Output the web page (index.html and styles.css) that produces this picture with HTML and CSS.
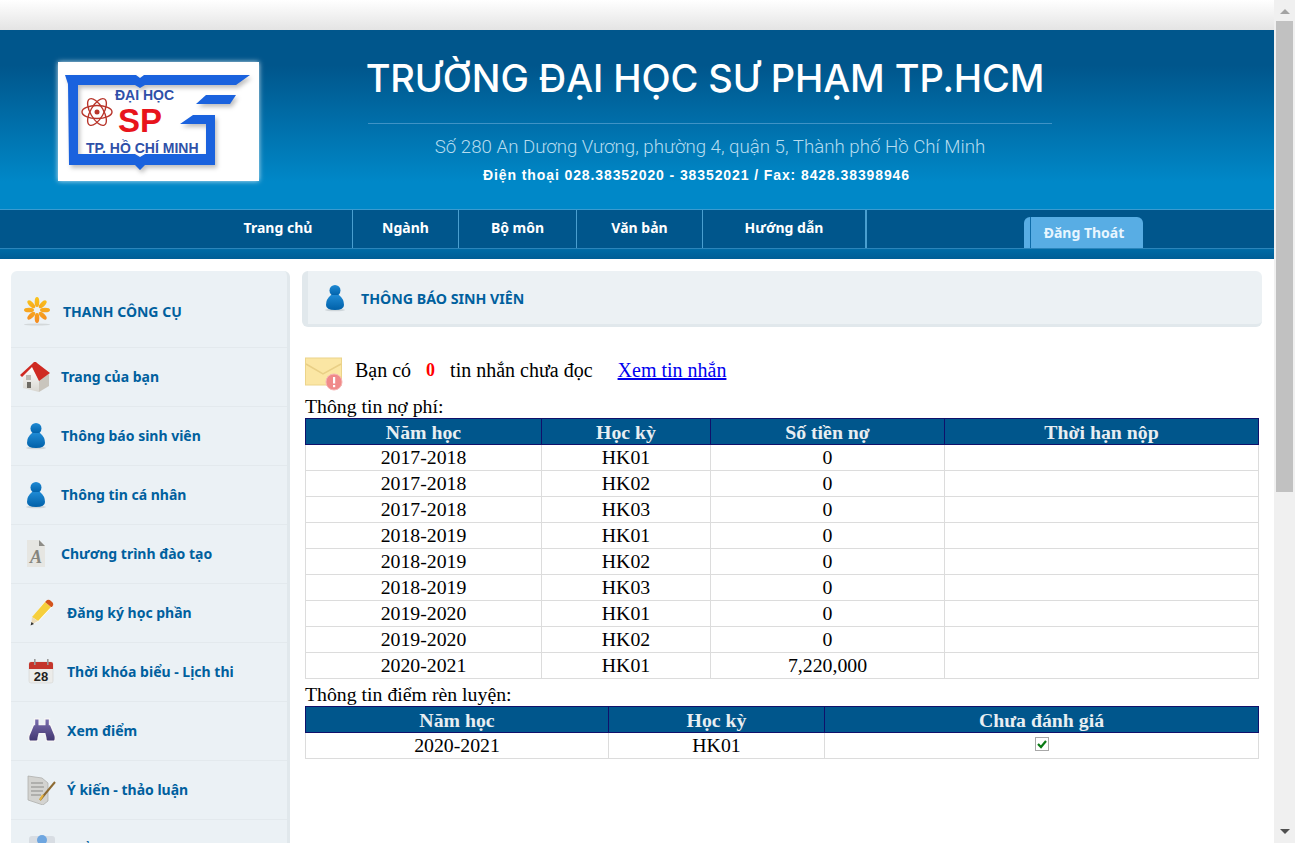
FILE: index.html
```html
<!DOCTYPE html>
<html>
<head>
    <title>Thông báo sinh viên</title>
    <link rel="stylesheet" href="styles.css">
</head>
<body>
    <div class="page">
        <div class="top-strip"></div>

        <div class="banner">
            <div class="logo-box">
                <svg class="logo" width="201" height="119" viewBox="0 0 201 119">
                    <path class="logo-frame" d="M7 13 H78 L82 16 L86 13 H192 L178 23 H87 L82 26 L77 23 H20 V92 H77 L82 95 L87 92 H148 V62 H122 L135 53 H157 V103 H87 L82 108 L77 103 H11 L10 22 Z"/>
                    <path class="logo-frame" d="M138 42 L148 33 H178 L172 42 Z"/>
                    <g fill="none" stroke="#b8352b" stroke-width="1.4">
                        <ellipse cx="39" cy="50" rx="15" ry="6.5"/>
                        <ellipse cx="39" cy="50" rx="15" ry="6.5" transform="rotate(60 39 50)"/>
                        <ellipse cx="39" cy="50" rx="15" ry="6.5" transform="rotate(120 39 50)"/>
                    </g>
                    <circle cx="39" cy="50" r="2.5" fill="#b8352b"/>
                    <text class="logo-small" x="57" y="38">ĐẠI HỌC</text>
                    <text class="logo-big" x="60" y="70">SP</text>
                    <text class="logo-small" x="28" y="91">TP. HỒ CHÍ MINH</text>
                </svg>
            </div>
            <div class="banner-text">
                <h1 class="school-name">TRƯỜNG ĐẠI HỌC SƯ PHẠM TP.HCM</h1>
                <div class="school-address">Số 280 An Dương Vương, phường 4, quận 5, Thành phố Hồ Chí Minh</div>
                <div class="school-phone">Điện thoại 028.38352020 - 38352021 / Fax: 8428.38398946</div>
            </div>
        </div>

        <div class="nav">
            <a class="nav-item nav-home" href="#">Trang chủ</a>
            <a class="nav-item nav-major" href="#">Ngành</a>
            <a class="nav-item nav-dept" href="#">Bộ môn</a>
            <a class="nav-item nav-docs" href="#">Văn bản</a>
            <a class="nav-item nav-help" href="#">Hướng dẫn</a>
            <a class="logout" href="#"><span class="logout-edge"></span><span class="logout-label">Đăng Thoát</span></a>
        </div>
        <div class="nav-under"></div>

        <div class="main">
            <div class="sidebar">
                <div class="side-head">
                    <svg class="flower" width="28" height="30" viewBox="0 0 28 30">
                        <defs>
                            <linearGradient id="petal" gradientUnits="userSpaceOnUse" x1="0" y1="1" x2="0" y2="27">
                                <stop offset="0" stop-color="#f9c41c"/>
                                <stop offset="1" stop-color="#f58a1f"/>
                            </linearGradient>
                        </defs>
                        <g fill="url(#petal)">
                            <ellipse cx="14" cy="6" rx="2.3" ry="5"/>
                            <ellipse cx="14" cy="22" rx="2.3" ry="5"/>
                            <ellipse cx="6" cy="14" rx="5" ry="2.3"/>
                            <ellipse cx="22" cy="14" rx="5" ry="2.3"/>
                            <ellipse cx="8.3" cy="8.3" rx="2.3" ry="5" transform="rotate(-45 8.3 8.3)"/>
                            <ellipse cx="19.7" cy="8.3" rx="2.3" ry="5" transform="rotate(45 19.7 8.3)"/>
                            <ellipse cx="8.3" cy="19.7" rx="2.3" ry="5" transform="rotate(45 8.3 19.7)"/>
                            <ellipse cx="19.7" cy="19.7" rx="2.3" ry="5" transform="rotate(-45 19.7 19.7)"/>
                        </g>
                        <ellipse cx="14" cy="28.5" rx="13" ry="1" fill="#d3d8da"/>
                    </svg>
                    <span>THANH CÔNG CỤ</span>
                </div>

                <a class="side-item" href="#">
                    <svg class="side-icon" width="31" height="31" viewBox="0 0 31 31">
                        <defs>
                            <linearGradient id="wall" x1="0" y1="0" x2="0" y2="1">
                                <stop offset="0" stop-color="#ffffff"/>
                                <stop offset="1" stop-color="#d8d6d0"/>
                            </linearGradient>
                        </defs>
                        <path d="M3 14 L12 5 L19 18 V30 L3 26 Z" fill="url(#wall)"/>
                        <path d="M19 18 L29 12 V24 L19 30 Z" fill="#c9c5bd"/>
                        <path d="M0 13 L12 2 L14 0 H16 L17 1 L30 11 L19 19 L12 5 L2 15 Z" fill="#cf2a22"/>
                        <rect x="6" y="13" width="5" height="5" fill="#bdbbb4"/>
                        <rect x="7" y="20" width="4" height="6" fill="#6e6b64"/>
                    </svg>
                    <span>Trang của bạn</span>
                </a>
                <a class="side-item" href="#">
                    <svg class="side-icon person" width="22" height="28" viewBox="0 0 22 28">
                        <use href="#person"/>
                    </svg>
                    <span>Thông báo sinh viên</span>
                </a>
                <a class="side-item" href="#">
                    <svg class="side-icon person" width="22" height="28" viewBox="0 0 22 28">
                        <use href="#person"/>
                    </svg>
                    <span>Thông tin cá nhân</span>
                </a>
                <a class="side-item" href="#">
                    <svg class="side-icon doc" width="22" height="30" viewBox="0 0 22 30">
                        <path d="M2 1 H14 L20 7 V28 H2 Z" fill="#e6e6e2"/>
                        <path d="M14 1 L20 7 H14 Z" fill="#8d8d88"/>
                        <text class="doc-letter" x="5" y="24">A</text>
                    </svg>
                    <span>Chương trình đào tạo</span>
                </a>
                <a class="side-item wide" href="#">
                    <svg class="side-icon" width="28" height="30" viewBox="0 0 28 30">
                        <path d="M3 28 L6 18 L19 2 L26 8 L12 23 Z" fill="#fff"/>
                        <path d="M5 19 L18 4 L24 9 L11 23 Z" fill="#f6cf3c"/>
                        <path d="M18 4 L20 2 Q22 1 24 3 L26 5 Q27 7 25 9 L24 9 Z" fill="#d3531c"/>
                        <path d="M5 19 L11 23 L4 27 Z" fill="#eadbb8"/>
                        <path d="M4.5 24 L7 26 L3.5 27.5 Z" fill="#333"/>
                    </svg>
                    <span>Đăng ký học phần</span>
                </a>
                <a class="side-item wide" href="#">
                    <svg class="side-icon" width="28" height="26" viewBox="0 0 28 26">
                        <rect x="2" y="3" width="24" height="21" rx="2" fill="#ececea" stroke="#d5d5d2" stroke-width="0.6"/>
                        <path d="M2 10 V5 Q2 3 4 3 H24 Q26 3 26 5 V10 Z" fill="#c4352c"/>
                        <rect x="7" y="0" width="1.6" height="6" fill="#999"/>
                        <rect x="20" y="0" width="1.6" height="6" fill="#999"/>
                        <text class="cal-day" x="14" y="22">28</text>
                    </svg>
                    <span>Thời khóa biểu - Lịch thi</span>
                </a>
                <a class="side-item wide" href="#">
                    <svg class="side-icon" width="30" height="28" viewBox="0 0 32 28">
                        <defs>
                            <linearGradient id="binoc" x1="0" y1="0" x2="0" y2="1">
                                <stop offset="0" stop-color="#7c70b0"/>
                                <stop offset="1" stop-color="#40356f"/>
                            </linearGradient>
                        </defs>
                        <path d="M8 1 H13 V7 H19 V1 H24 V7 H25 L30 19 Q31 25 28 25 H22 Q20 25 20 21 L19 17 H13 L12 21 Q12 25 10 25 H4 Q1 25 2 19 L7 7 H8 Z" fill="url(#binoc)" stroke="#f5f5f5" stroke-width="1.5"/>
                    </svg>
                    <span>Xem điểm</span>
                </a>
                <a class="side-item wide" href="#">
                    <svg class="side-icon" width="30" height="30" viewBox="0 0 30 30">
                        <path d="M1 1 L15 3 L21 8 V26 L16 30 L1 25 Z" fill="#d3d3d0" stroke="#a9a9a6" stroke-width="0.7"/>
                        <path d="M4 8 H16 M4 12 H17 M4 16 H16 M4 20 H14" stroke="#8c8c88" stroke-width="1.2"/>
                        <path d="M13 25 L28 7" stroke="#8d6a32" stroke-width="2"/>
                        <path d="M13 25 L16 20" stroke="#e5b23b" stroke-width="2"/>
                    </svg>
                    <span>Ý kiến - thảo luận</span>
                </a>
                <a class="side-item wide" href="#">
                    <svg class="side-icon" width="30" height="30" viewBox="0 0 30 30">
                        <rect x="2" y="2" width="26" height="24" rx="3" fill="#d8dde3"/>
                        <circle cx="15" cy="6" r="5" fill="#6ea6e0"/>
                    </svg>
                    <span>Kiểm tra học phí</span>
                </a>
            </div>

            <div class="content">
                <div class="content-head">
                    <svg class="head-icon" width="22" height="28" viewBox="0 0 22 28">
                        <defs>
                            <linearGradient id="personFill" x1="0" y1="0" x2="0" y2="1">
                                <stop offset="0" stop-color="#1f8ad4"/>
                                <stop offset="1" stop-color="#0060a8"/>
                            </linearGradient>
                            <g id="person">
                                <ellipse cx="11" cy="26" rx="10" ry="1.3" fill="#cfd6da"/>
                                <circle cx="11" cy="6.5" r="5.5" fill="url(#personFill)"/>
                                <path d="M7 11 H15 Q20 15 20 21 Q20 26 11 26 Q2 26 2 21 Q2 15 7 11 Z" fill="url(#personFill)"/>
                            </g>
                        </defs>
                        <use href="#person"/>
                    </svg>
                    <span>THÔNG BÁO SINH VIÊN</span>
                </div>

                <div class="notice">
                    <svg class="mail-icon" width="38" height="34" viewBox="0 0 38 34">
                        <rect x="0.5" y="1" width="36" height="27" fill="#fbe6a4" stroke="#ecd48a"/>
                        <path d="M1 7 L18 17 L36 7" fill="none" stroke="#e9cf86" stroke-width="1.5"/>
                        <circle cx="29" cy="25" r="8" fill="#f08a8a" stroke="#f6b5b5"/>
                        <rect x="28" y="20" width="2.2" height="6.5" fill="#fff"/>
                        <rect x="28" y="28" width="2.2" height="2.2" fill="#fff"/>
                    </svg>
                    <span>Bạn có</span>
                    <span class="count">0</span>
                    <span>tin nhắn chưa đọc</span>
                    <a class="read-link" href="#">Xem tin nhắn</a>
                </div>

                <div class="table-title">Thông tin nợ phí:</div>
                <table class="data-table fee-table">
                    <colgroup>
                        <col class="fee-c1"><col class="fee-c2"><col class="fee-c3"><col class="fee-c4">
                    </colgroup>
                    <tr><th>Năm học</th><th>Học kỳ</th><th>Số tiền nợ</th><th>Thời hạn nộp</th></tr>
                    <tr><td>2017-2018</td><td>HK01</td><td>0</td><td></td></tr>
                    <tr><td>2017-2018</td><td>HK02</td><td>0</td><td></td></tr>
                    <tr><td>2017-2018</td><td>HK03</td><td>0</td><td></td></tr>
                    <tr><td>2018-2019</td><td>HK01</td><td>0</td><td></td></tr>
                    <tr><td>2018-2019</td><td>HK02</td><td>0</td><td></td></tr>
                    <tr><td>2018-2019</td><td>HK03</td><td>0</td><td></td></tr>
                    <tr><td>2019-2020</td><td>HK01</td><td>0</td><td></td></tr>
                    <tr><td>2019-2020</td><td>HK02</td><td>0</td><td></td></tr>
                    <tr><td>2020-2021</td><td>HK01</td><td>7,220,000</td><td></td></tr>
                </table>

                <div class="table-title">Thông tin điểm rèn luyện:</div>
                <table class="data-table score-table">
                    <colgroup>
                        <col class="score-c1"><col class="score-c2"><col class="score-c3">
                    </colgroup>
                    <tr><th>Năm học</th><th>Học kỳ</th><th>Chưa đánh giá</th></tr>
                    <tr>
                        <td>2020-2021</td>
                        <td>HK01</td>
                        <td>
                            <svg class="check" width="14" height="14" viewBox="0 0 14 14">
                                <rect x="0.5" y="0.5" width="13" height="13" fill="#fff" stroke="#a8a8a8"/>
                                <path d="M3 7 L6 10 L11 4" fill="none" stroke="#0a7a14" stroke-width="2.2"/>
                            </svg>
                        </td>
                    </tr>
                </table>
            </div>
        </div>
    </div>

    <div class="scrollbar">
        <div class="arrow-up"></div>
        <div class="thumb"></div>
        <div class="arrow-down"></div>
    </div>
</body>
</html>
```

FILE: styles.css
```css
html, body {
    height: 100%;
    margin: 0;
    overflow: hidden;
}

body {
    display: flex;
    font-family: "Liberation Serif", serif;
    background-color: white;
}

.page {
    width: 1274px;
    height: 843px;
    overflow: hidden;
    flex-shrink: 0;
}

.top-strip {
    height: 30px;
    background: linear-gradient(#ffffff, #e4e4e4);
}

/* banner */
.banner {
    height: 179px;
    display: flex;
    background: linear-gradient(#00568c 0%, #00568c 20%, #0088c8 85%, #0088c8 100%);
}

.logo-box {
    width: 201px;
    height: 119px;
    margin: 32px 0 0 58px;
    background-color: white;
    box-shadow: 0 0 5px rgba(255, 255, 255, 0.8);
}

.logo-frame {
    fill: #1a62de;
    filter: drop-shadow(2px 3px 2px rgba(0, 0, 0, 0.25));
}

.logo-small {
    font: bold 14px "Liberation Sans", sans-serif;
    fill: #2f50a8;
}

.logo-big {
    font: bold 33px "Liberation Sans", sans-serif;
    fill: #e8141c;
}

.banner-text {
    width: 684px;
    margin-left: 109px;
    text-align: center;
    color: white;
}

.school-name {
    margin: 25px 0 0;
    padding-bottom: 22px;
    font: 500 38px Inter, sans-serif;
    letter-spacing: -0.1px;
    text-indent: -10px;
    line-height: 46px;
    white-space: nowrap;
    border-bottom: 1px solid #3f93c6;
}

.school-address {
    margin-top: 13px;
    font: 300 18.7px Roboto, sans-serif;
    color: #b5dcef;
    line-height: 20px;
    white-space: nowrap;
}

.school-phone {
    margin-top: 10px;
    font: bold 14px "Liberation Sans", sans-serif;
    letter-spacing: 0.9px;
    text-indent: -27px;
    line-height: 16px;
    white-space: nowrap;
}

/* menu */
.nav {
    height: 38px;
    display: flex;
    background-color: #00568c;
    border-top: 1px solid #3a9bd0;
    font: bold 14px "Noto Sans", sans-serif;
}

.nav-item {
    display: block;
    height: 38px;
    line-height: 36px;
    text-align: center;
    color: white;
    text-decoration: none;
    border-right: 1px solid #4a9fd0;
}

.nav-home { width: 136px; padding-right: 6px; margin-left: 210px; }
.nav-major { width: 105px; }
.nav-dept { width: 117px; }
.nav-docs { width: 125px; }
.nav-help { width: 162px; border-right-width: 2px; }

.logout {
    display: flex;
    height: 31px;
    margin: 7px 0 0 157px;
    color: #e8f6ff;
    text-decoration: none;
    line-height: 32px;
}

.logout-edge {
    width: 6px;
    background-color: #58ade4;
    border-radius: 6px 0 0 0;
    border-right: 1px solid #0f6ca8;
}

.logout-label {
    width: 106px;
    padding-right: 6px;
    text-align: center;
    background-color: #58ade4;
    border-radius: 0 6px 0 0;
}

.nav-under {
    height: 10px;
    background: linear-gradient(#006ba6, #005e96);
    border-top: 1px solid #2b85bb;
}

/* main part */
.main {
    display: flex;
    padding: 12px 12px 0 11px;
}

.sidebar {
    width: 276px;
    height: 600px;
    flex-shrink: 0;
    background-color: #ebf1f5;
    border-right: 3px solid #e1e8ec;
    border-radius: 6px 6px 0 0;
    font: bold 14px "Noto Sans", sans-serif;
    color: #00609e;
}

.side-head {
    height: 77px;
    display: flex;
    align-items: center;
    gap: 12px;
    padding: 4px 0 0 12px;
    border-bottom: 1px solid #e3e9ed;
    box-sizing: border-box;
}

.side-item {
    height: 59px;
    display: grid;
    grid-template-columns: 50px 1fr;
    align-items: center;
    box-sizing: border-box;
    border-bottom: 1px solid #e3e9ed;
    color: #00609e;
    text-decoration: none;
}

.side-item span {
    margin-bottom: 2px;
}

.side-item.wide {
    grid-template-columns: 56px 1fr;
}

.side-icon {
    margin-left: 9px;
}

.side-icon.person,
.side-icon.doc {
    margin-left: 14px;
}

.side-item.wide .side-icon {
    margin-left: 16px;
}

.doc-letter {
    font: italic bold 18px "Liberation Serif", serif;
    fill: #85857e;
}

.cal-day {
    font: bold 13px "Liberation Sans", sans-serif;
    fill: #222;
    text-anchor: middle;
}

.content {
    width: 960px;
    margin-left: 12px;
}

.content-head {
    height: 56px;
    display: flex;
    align-items: center;
    box-sizing: border-box;
    background-color: #ecf1f4;
    border-left: 6px solid #e1e8ec;
    border-bottom: 3px solid #e1e8ec;
    border-radius: 6px;
    padding-left: 16px;
    font: bold 14.2px "Noto Sans", sans-serif;
    color: #00609e;
}

.content-head span {
    padding-top: 2px;
}

.head-icon {
    margin-right: 15px;
}

.notice {
    display: flex;
    align-items: center;
    margin: 30px 0 0 3px;
    height: 34px;
    font-size: 20px;
}

.notice span,
.notice a {
    margin-bottom: 8px;
}

.mail-icon {
    margin-right: 12px;
}

.notice .count {
    margin-left: 15px;
    margin-right: 15px;
    color: red;
    font-size: 18px;
    font-weight: bold;
}

.notice .read-link {
    margin-left: 25px;
    color: #0000ee;
}

.table-title {
    margin-left: 3px;
    padding-top: 3px;
    font-size: 19.8px;
    line-height: 24px;
}

.data-table {
    width: 953px;
    margin-left: 3px;
    border-collapse: collapse;
    table-layout: fixed;
    font-size: 19.8px;
}

.data-table th {
    height: 25px;
    padding: 0;
    background-color: #00568c;
    color: #e8eef2;
    border: 1px solid #10106a;
    line-height: 20px;
}

.data-table td {
    height: 23px;
    padding: 0 0 2px;
    text-align: center;
    border: 1px solid #dcdcdc;
    line-height: 20px;
}

.fee-c1 { width: 236px; }
.fee-c2 { width: 169px; }
.fee-c3 { width: 234px; }
.fee-c4 { width: 314px; }

.score-c1 { width: 303px; }
.score-c2 { width: 216px; }
.score-c3 { width: 434px; }

.check {
    display: block;
    margin: 0 auto 1px;
}

/* fake page scrollbar */
.scrollbar {
    width: 21px;
    height: 843px;
    flex-shrink: 0;
    display: flex;
    flex-direction: column;
    align-items: center;
    background-color: #f0f0f0;
}

.thumb {
    width: 17px;
    height: 471px;
    margin-top: 7px;
    background-color: #c1c1c1;
}

.arrow-up {
    width: 0;
    margin-top: 9px;
    border-left: 5px solid transparent;
    border-right: 5px solid transparent;
    border-bottom: 5px solid #a3a3a3;
}

.arrow-down {
    width: 0;
    margin-top: auto;
    margin-bottom: 9px;
    border-left: 5px solid transparent;
    border-right: 5px solid transparent;
    border-top: 5px solid #505050;
}
```
